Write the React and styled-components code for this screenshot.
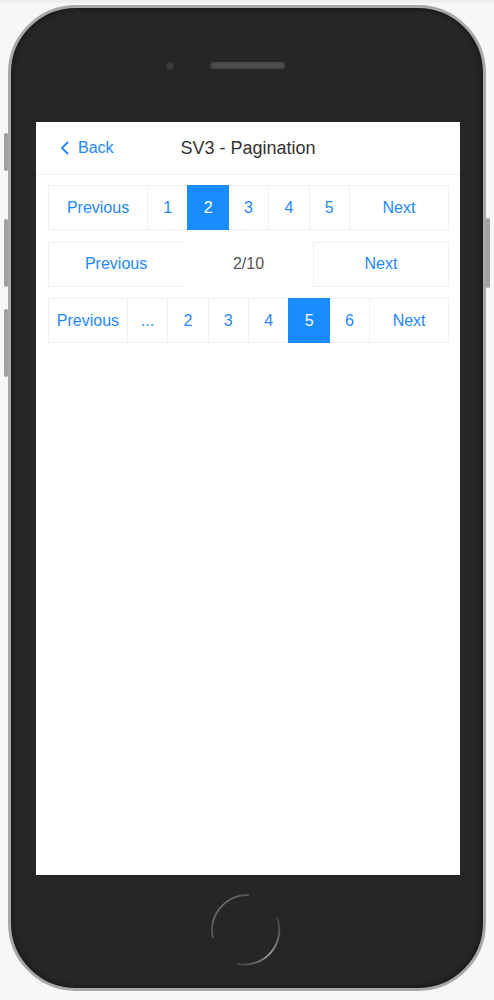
import styled, { createGlobalStyle } from 'styled-components'

const GlobalStyle = createGlobalStyle`
html, body {
	margin: 0;
	padding: 0;
	background-color: #f6f8f8;
	font-family: "Liberation Sans", Arial, sans-serif;
}
body {
	border-top: 3px solid #eceef0;
}
`

const Phone = styled.div`
position: relative;
box-sizing: border-box;
width: 478px;
height: 986px;
margin: 2px 0 0 8px;
border: 3px solid #a8a8a8;
border-radius: 68px;
background-color: #262626;
box-shadow: inset 0 0 6px rgba(0, 0, 0, 0.6);
display: flex;
flex-direction: column;
`

const SideButton = styled.div`
position: absolute;
width: 4px;
top: ${p => p.top}px;
height: ${p => p.height}px;
${p => p.right ? 'right: -7px;' : 'left: -7px;'}
background-color: #a0a0a0;
border-radius: 2px;
`

const TopBezel = styled.div`
height: 114px;
display: flex;
justify-content: center;
align-items: flex-start;
padding-top: 54px;
box-sizing: border-box;
gap: 37px;
padding-right: 42px;
`

const Camera = styled.div`
width: 6px;
height: 6px;
margin-top: 1px;
border-radius: 50%;
background-color: #3b3b42;
box-shadow: 0 0 2px #555;
`

const Speaker = styled.div`
width: 75px;
height: 7px;
border-radius: 4px;
background-color: #4c4c4c;
box-shadow: inset 0 0 2px #333;
`

const Screen = styled.div`
width: 424px;
height: 753px;
margin-left: 25px;
background-color: #ffffff;
display: flex;
flex-direction: column;
`

const NavBar = styled.div`
position: relative;
height: 52px;
border-bottom: 1px solid #f2f2f2;
display: flex;
align-items: center;
justify-content: center;
`

const BackLink = styled.div`
position: absolute;
left: 24px;
top: 0;
bottom: 0;
display: flex;
align-items: center;
gap: 8px;
color: #1e88ff;
font-size: 16px;
`

const Title = styled.div`
font-size: 18px;
color: #333333;
`

const Content = styled.div`
padding: 10px 11px 0 12px;
display: flex;
flex-direction: column;
gap: 11.5px;
`

const Pager = styled.div`
display: flex;
height: 45px;
`

const Cell = styled.div`
box-sizing: border-box;
flex: ${p => p.wide ? `${p.grow || 1} 1 0` : '0 0 41.4px'};
margin-left: -1px;
&:first-child {
	margin-left: 0;
}
display: flex;
align-items: center;
justify-content: center;
font-size: 16px;
border: 1px solid ${p => p.active ? '#1a8cff' : (p.plain ? 'transparent' : '#f0f0f0')};
background-color: ${p => p.active ? '#1a8cff' : '#ffffff'};
color: ${p => p.active ? '#ffffff' : (p.plain ? '#555555' : '#1e88ff')};
position: relative;
z-index: ${p => p.active ? 1 : 0};
`

const BottomBezel = styled.div`
flex: 1;
display: flex;
justify-content: center;
padding-top: 18px;
padding-right: 2px;
`

const HomeButton = () => (
	<svg width="74" height="74" viewBox="0 0 74 74">
		<defs>
			<linearGradient id="hb1" x1="0" y1="0" x2="1" y2="1">
				<stop offset="0" stopColor="#888" stopOpacity="0.9" />
				<stop offset="1" stopColor="#888" stopOpacity="0.1" />
			</linearGradient>
			<linearGradient id="hb2" x1="1" y1="0" x2="0" y2="1">
				<stop offset="0" stopColor="#999" stopOpacity="0.2" />
				<stop offset="0.5" stopColor="#9a9a9a" stopOpacity="1" />
				<stop offset="1" stopColor="#888" stopOpacity="0.3" />
			</linearGradient>
		</defs>
		<path d="M 40 2.2 A 35 35 0 0 0 4 45" fill="none" stroke="url(#hb1)" strokeWidth="1.6" />
		<path d="M 68 24 A 35 35 0 0 1 28 70.8" fill="none" stroke="url(#hb2)" strokeWidth="1.8" />
	</svg>
)

const Chevron = () => (
	<svg width="10" height="14" viewBox="0 0 10 14">
		<path d="M8 1 L2 7 L8 13" fill="none" stroke="#1e88ff" strokeWidth="1.8" />
	</svg>
)

const App = () => {
	const first = ['1', '2', '3', '4', '5']
	const third = ['...', '2', '3', '4', '5', '6']

	return (
		<>
			<GlobalStyle />
			<Phone>
				<SideButton top={125} height={38} />
				<SideButton top={211} height={68} />
				<SideButton top={301} height={68} />
				<SideButton right top={210} height={70} />
				<TopBezel>
					<Camera />
					<Speaker />
				</TopBezel>
				<Screen>
					<NavBar>
						<BackLink><Chevron />Back</BackLink>
						<Title>SV3 - Pagination</Title>
					</NavBar>
					<Content>
						<Pager>
							<Cell wide>Previous</Cell>
							{first.map(n => <Cell key={n} active={n === '2'}>{n}</Cell>)}
							<Cell wide>Next</Cell>
						</Pager>
						<Pager>
							<Cell wide>Previous</Cell>
							<Cell wide plain grow={0.96}>2/10</Cell>
							<Cell wide>Next</Cell>
						</Pager>
						<Pager>
							<Cell wide>Previous</Cell>
							{third.map(n => <Cell key={n} active={n === '5'}>{n}</Cell>)}
							<Cell wide>Next</Cell>
						</Pager>
					</Content>
				</Screen>
				<BottomBezel>
					<HomeButton />
				</BottomBezel>
			</Phone>
		</>
	)
}

export default App
